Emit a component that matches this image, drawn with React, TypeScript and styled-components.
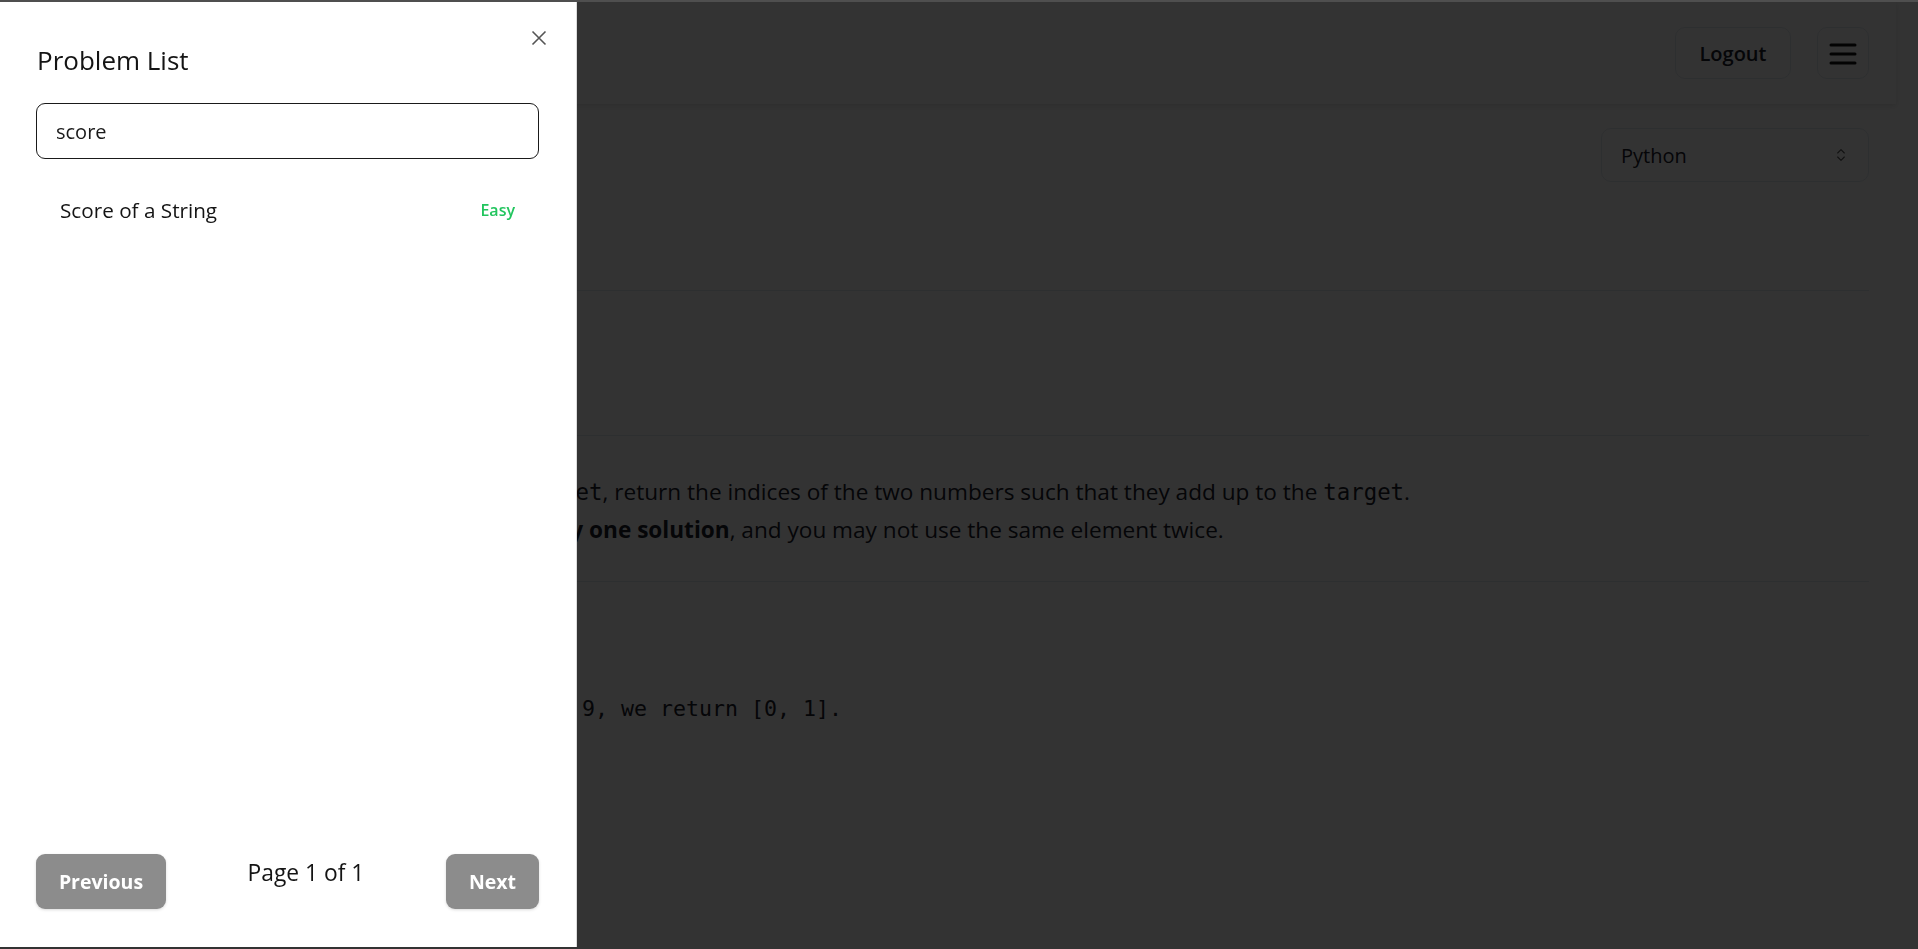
import React from 'react'
import styled, { createGlobalStyle } from 'styled-components'
import { ChevronsUpDown } from 'lucide-react'

const GlobalStyle = createGlobalStyle`
  html, body {
    margin: 0;
    padding: 0;
    background: #ffffff;
    overflow: hidden;
  }
  body {
    font-family: 'Open Sans', 'Noto Sans', sans-serif;
    color: #1a202c;
  }
  * {
    box-sizing: border-box;
  }
`

const TopEdge = styled.div`
  position: fixed;
  top: 0;
  left: 0;
  right: 0;
  height: 2px;
  background: #4f4f4f;
  z-index: 30;
`

const Page = styled.div`
  width: 1896px;
  height: 949px;
  padding-top: 2px;
`

const Header = styled.header`
  height: 102px;
  display: flex;
  align-items: center;
  justify-content: flex-end;
  padding: 0 27px 0 26px;
  box-shadow: 0 2px 6px rgba(0, 0, 0, 0.12);
`

const HeaderActions = styled.div`
  display: flex;
  align-items: center;
  gap: 26px;
`

const GhostButton = styled.button<{ width?: number }>`
  width: ${p => p.width || 52}px;
  height: 52px;
  border: 1px solid #e2e8f0;
  border-radius: 10px;
  background: #ffffff;
  display: flex;
  align-items: center;
  justify-content: center;
  font-family: inherit;
  font-size: 20px;
  font-weight: 600;
  color: #1a202c;
  padding: 0;
`

const Main = styled.main`
  padding: 24px 27px 0 26px;
`

const Toolbar = styled.div`
  height: 54px;
  display: flex;
  justify-content: flex-end;
`

const LanguageSelect = styled.div`
  width: 268px;
  height: 54px;
  border: 1px solid #e2e8f0;
  border-radius: 10px;
  display: flex;
  align-items: center;
  justify-content: space-between;
  padding: 0 19px 0 19px;
  font-size: 20px;
  color: #1a202c;
`

const Section = styled.section<{ height: number; padTop?: number }>`
  height: ${p => p.height}px;
  padding-top: ${p => p.padTop || 0}px;
  border-bottom: 1px solid #e2e8f0;
`

const Title = styled.h1`
  margin: 0;
  font-size: 30px;
  font-weight: 700;
`

const Tag = styled.span`
  display: inline-block;
  font-size: 18px;
  color: #38a169;
  font-weight: 600;
`

const Paragraph = styled.p`
  margin: 0;
  font-size: 22.6px;
  line-height: 38px;
`

const Code = styled.code`
  font-family: 'DejaVu Sans Mono', 'Liberation Mono', monospace;
  font-size: 22.4px;
`

const Example = styled.div`
  padding: 17px 0 0 10px;
`

const ExampleLabel = styled.h3`
  margin: 0 0 8px;
  font-size: 20px;
  font-weight: 700;
`

const Pre = styled.pre`
  margin: 0;
  font-family: 'DejaVu Sans Mono', 'Liberation Mono', monospace;
  font-size: 21.6px;
  line-height: 30px;
`

const Overlay = styled.div`
  position: fixed;
  inset: 0;
  background: rgba(0, 0, 0, 0.8);
  z-index: 10;
`

const Drawer = styled.aside`
  position: fixed;
  top: 2px;
  bottom: 2px;
  left: 0;
  width: 576px;
  background: #ffffff;
  z-index: 20;
  display: flex;
  flex-direction: column;
  box-shadow: 1px 0 0 #dcdcdc;
`

const DrawerHeader = styled.h2`
  margin: 0;
  padding: 40px 37px 25px 37px;
  font-size: 26px;
  line-height: 36px;
  font-weight: 400;
  color: #141414;
`

const CloseButton = styled.button`
  position: absolute;
  top: 20px;
  right: 21px;
  width: 32px;
  height: 32px;
  border: none;
  background: transparent;
  display: flex;
  align-items: center;
  justify-content: center;
  padding: 0;
`

const DrawerBody = styled.div`
  padding: 0 37px 0 36px;
  flex: 1;
`

const SearchInput = styled.input`
  width: 100%;
  height: 56px;
  border: 1.5px solid #1a1a1a;
  border-radius: 9px;
  padding: 0 19px;
  font-family: inherit;
  font-size: 20px;
  color: #1a1a1a;
  outline: none;
`

const ProblemList = styled.ul`
  list-style: none;
  margin: 0;
  padding: 27px 0 0;
`

const ProblemRow = styled.li`
  height: 48px;
  display: flex;
  align-items: center;
  justify-content: space-between;
  padding: 0 24px 0 24px;
`

const ProblemName = styled.span`
  font-size: 20.7px;
  color: #141414;
`

const Difficulty = styled.span<{ level: 'Easy' | 'Medium' | 'Hard' }>`
  font-size: 16px;
  font-weight: 600;
  color: ${p => (p.level === 'Easy' ? '#22c55e' : p.level === 'Medium' ? '#eab308' : '#ef4444')};
`

const DrawerFooter = styled.div`
  display: flex;
  align-items: flex-start;
  justify-content: space-between;
  padding: 0 37px 38px 36px;
`

const PageButton = styled.button<{ width: number }>`
  width: ${p => p.width}px;
  height: 55px;
  border: none;
  border-radius: 9px;
  background: #8c8c8c;
  color: #ffffff;
  font-family: inherit;
  font-size: 19.5px;
  font-weight: 700;
  box-shadow: 0 1px 3px rgba(0, 0, 0, 0.15);
  padding: 0;
`

const PageInfo = styled.span`
  padding-top: 3px;
  font-size: 22.8px;
  line-height: 32px;
  color: #141414;
`

const problems: { name: string; level: 'Easy' | 'Medium' | 'Hard' }[] = [
  { name: 'Score of a String', level: 'Easy' },
]

export default function App() {
  return (
    <>
      <GlobalStyle />
      <TopEdge />
      <Page>
        <Header>
          <HeaderActions>
            <GhostButton width={116}>Logout</GhostButton>
            <GhostButton aria-label="Menu">
              <svg width="28" height="24" viewBox="0 0 28 24">
                <path d="M2 4h24M2 13h24M2 22h24" stroke="#111" strokeWidth="3" strokeLinecap="round" />
              </svg>
            </GhostButton>
          </HeaderActions>
        </Header>
        <Main>
          <Toolbar>
            <LanguageSelect>
              Python
              <ChevronsUpDown size={16} color="#555" strokeWidth={1.6} />
            </LanguageSelect>
          </Toolbar>
          <Section height={109} padTop={40}>
            <Title>1. Two Sum</Title>
          </Section>
          <Section height={145} padTop={50}>
            <Tag>Easy</Tag>
          </Section>
          <Section height={146} padTop={37}>
            <Paragraph>
              Given an array of integers <Code>nums</Code> and an integer <Code>target</Code>, return the indices of the
              two numbers such that they add up to the <Code>target</Code>.
            </Paragraph>
            <Paragraph>
              You may assume that each input would have <strong>exactly one solution</strong>, and you may not use the
              same element twice.
            </Paragraph>
          </Section>
          <Example>
            <ExampleLabel>Example 1:</ExampleLabel>
            <Pre>
              {'Input: nums = [2,7,11,15], target = 9\nOutput: [0,1]\nExplanation: Because nums[0] + nums[1] == 9, we return [0, 1].'}
            </Pre>
          </Example>
        </Main>
      </Page>
      <Overlay />
      <Drawer>
        <DrawerHeader>Problem List</DrawerHeader>
        <CloseButton aria-label="Close">
          <svg width="16" height="16" viewBox="0 0 16 16">
            <path d="M1.5 1.5l13 13M14.5 1.5l-13 13" stroke="#555" strokeWidth="1.6" />
          </svg>
        </CloseButton>
        <DrawerBody>
          <SearchInput defaultValue="score" />
          <ProblemList>
            {problems.map(p => (
              <ProblemRow key={p.name}>
                <ProblemName>{p.name}</ProblemName>
                <Difficulty level={p.level}>{p.level}</Difficulty>
              </ProblemRow>
            ))}
          </ProblemList>
        </DrawerBody>
        <DrawerFooter>
          <PageButton width={130}>Previous</PageButton>
          <PageInfo>Page 1 of 1</PageInfo>
          <PageButton width={93}>Next</PageButton>
        </DrawerFooter>
      </Drawer>
    </>
  )
}
